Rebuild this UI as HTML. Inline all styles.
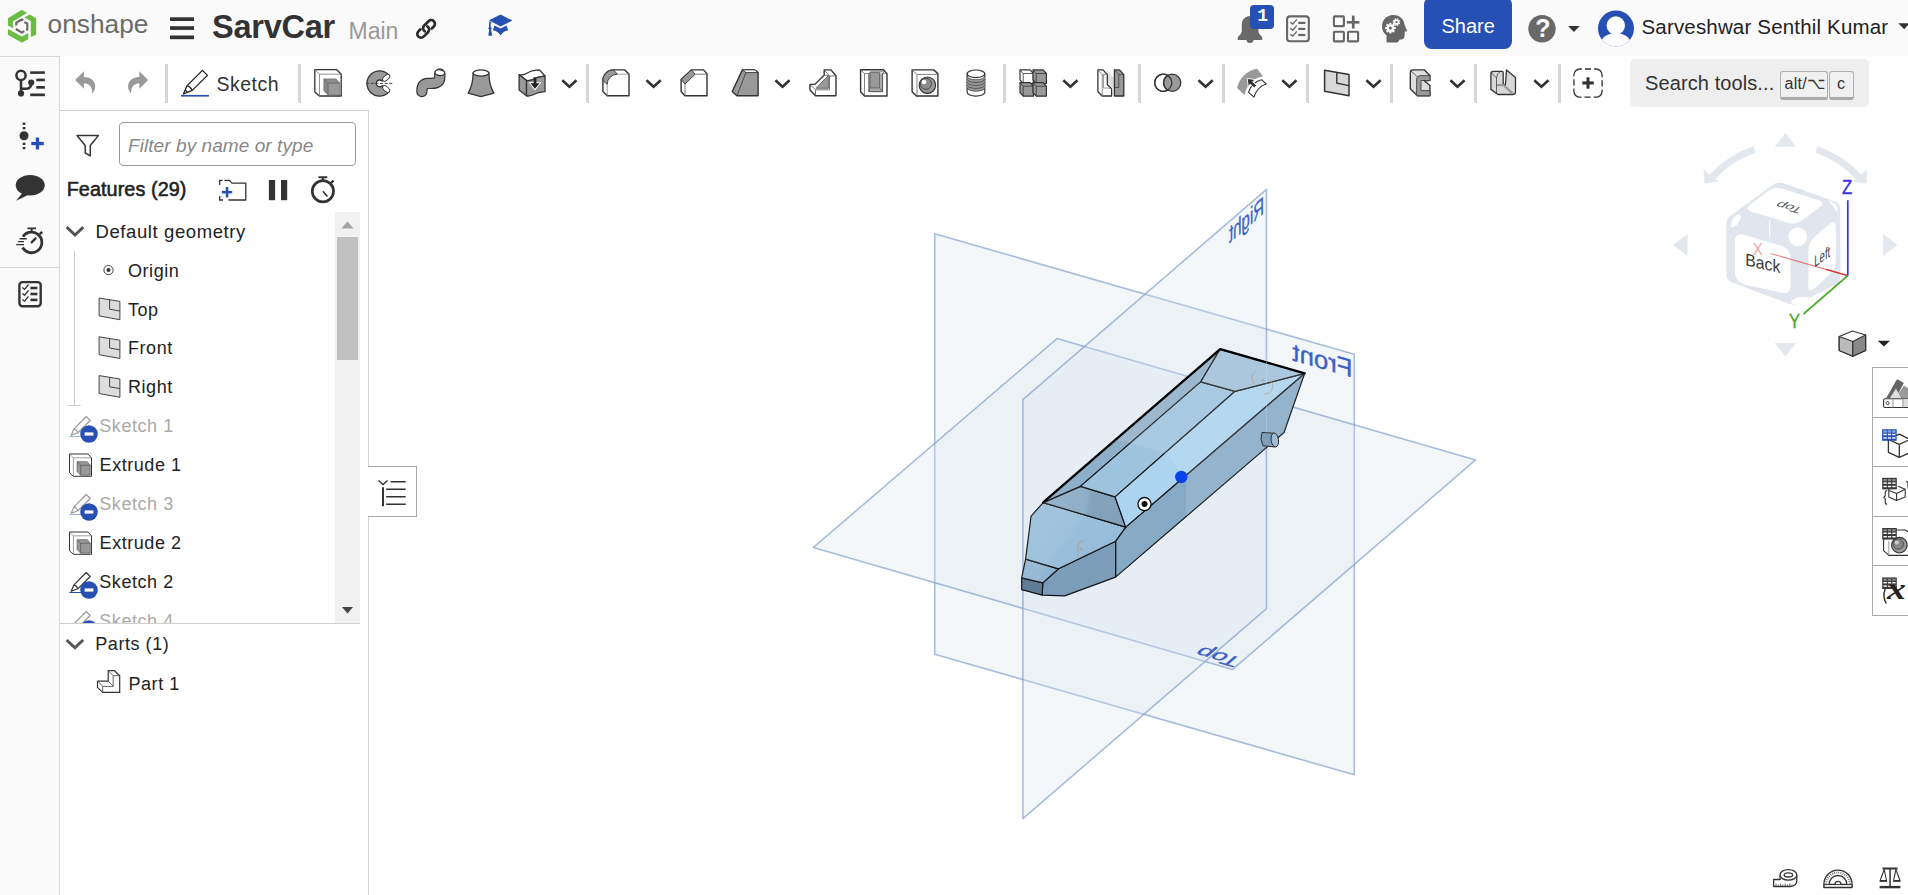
<!DOCTYPE html>
<html lang="en">
<head>
<meta charset="utf-8">
<title>SarvCar - Onshape</title>
<style>
*{box-sizing:border-box;margin:0;padding:0}
html,body{width:1908px;height:895px;overflow:hidden;background:#fff}
body{font-family:"Liberation Sans",sans-serif;color:#333;position:relative}
.abs{position:absolute}
.t{position:absolute;white-space:nowrap;line-height:1}
svg{position:absolute;overflow:visible}
#header{left:0;top:0;width:1908px;height:56px;background:#fafafa}
#leftbar{left:0;top:56px;width:60px;height:839px;background:#fafafa;border-top:1px solid #d8d8d8;border-right:1px solid #d8d8d8}
#toolbar{left:60px;top:56px;width:1848px;height:54px;background:#fff}
#panel{left:60px;top:110px;width:309px;height:785px;background:#fff;border-right:1px solid #d4d4d4;border-top:1px solid #d4d4d4}
.sep{position:absolute;top:64px;width:2.6px;height:39px;background:#d6d6d6}
.key{top:71px;height:29px;background:#f0f0f0;border:1px solid #b0b0b0;border-bottom:3px solid #aaa;border-radius:3px}
.tr{font-size:18px;letter-spacing:0.55px;color:#222}
.sup{color:#aaa}
.pl{color:#3c5fc6;-webkit-text-stroke:0.35px #3c5fc6}
.gt{fill:#8a8a8a}
.row{position:absolute;left:0;height:39px;width:275px}
</style>
</head>
<body>
<div id="header" class="abs"></div>
<div id="toolbar" class="abs"></div>
<div id="leftbar" class="abs"></div>
<div id="panel" class="abs"></div>

<!-- HEADER -->
<div id="hdr">
<span class="t" style="left:47.5px;top:10.5px;font-size:26.3px;color:#6b6b6b;">onshape</span>
<span class="t" style="left:212px;top:10.5px;font-size:32.5px;font-weight:700;color:#333;letter-spacing:-0.25px">SarvCar</span>
<span class="t" style="left:348.5px;top:19.5px;font-size:23px;color:#999">Main</span>
<div class="abs" style="left:1424px;top:-3px;width:88px;height:52px;background:#2650b3;border-radius:7.5px"></div>
<span class="t" style="left:1441.5px;top:16px;font-size:20px;color:#fff">Share</span>
<span class="t" style="left:1641.5px;top:17px;font-size:20.5px;color:#222;letter-spacing:0.17px">Sarveshwar Senthil Kumar</span>
<div class="abs" style="left:1250px;top:5px;width:24px;height:24px;background:#2650b3;border-radius:4px;z-index:3"></div>
<span class="t" style="left:1257.3px;top:6.5px;font-family:'Liberation Mono',monospace;font-weight:700;font-size:18px;color:#fff;z-index:4">1</span>
<span class="t" style="left:1535.2px;top:16.2px;font-weight:700;font-size:25px;color:#fff;z-index:4">?</span>
<svg width="1908" height="56" viewBox="0 0 1908 56" style="left:0;top:0">
 <!-- logo -->
 <g fill="#6cbb45">
  <polygon points="21.9,9.8 27.1,13.1 13.1,21.2 13.1,28.3 7.9,25.6 7.9,18.25"/>
  <polygon points="29.55,14.55 36.2,18.25 36.2,34.7 30.8,36.9 30.8,21.2 24.4,17.5"/>
  <polygon points="7.9,29.1 21.9,36.4 28.3,33 28.3,39.1 21.9,42.8 7.9,34.7"/>
 </g>
 <g fill="none" stroke="#666" stroke-width="2.1">
  <polyline points="23.3,20.2 21.9,19.5 16.3,22.7 16.3,25.6"/>
  <polyline points="15.8,29 21.9,32.6 24.3,31.2"/>
  <polyline points="24.4,22 27.3,23.6 27.3,29.6 26.2,30.2"/>
 </g>
 <!-- hamburger -->
 <g fill="#333"><rect x="170" y="17.3" width="24" height="3.7"/><rect x="170" y="26.2" width="24" height="3.7"/><rect x="170" y="35.5" width="24" height="3.7"/></g>
 <!-- link -->
 <g transform="translate(426.1,28.9) rotate(-45)" fill="none" stroke="#2b2b2b" stroke-width="2.7" stroke-linecap="round">
  <path d="M4.3,3.7 L7.2,3.7 A3.7,3.7 0 0 0 7.2,-3.7 L1,-3.7 A3.7,3.7 0 0 0 -2.6,0.9"/>
  <path d="M-4.3,-3.7 L-7.2,-3.7 A3.7,3.7 0 0 0 -7.2,3.7 L-1,3.7 A3.7,3.7 0 0 0 2.6,-0.9"/>
 </g>
 <!-- grad cap -->
 <g fill="#2650b3">
  <polygon points="500.6,14.6 512.4,20.6 500.6,26.6 489,20.3"/>
  <path d="M494.3,25.4 L500.6,28.5 L506.6,25.4 L508.1,30.3 C504.4,30.7 501.9,33.2 500.6,35.4 C499.3,33.2 496.8,30.7 493,30.3 Z"/>
  <path d="M489.6,21 C489,23 488.9,25 489,27.2 L490.6,27.2 C490.5,25 490.7,23.5 491.4,22 Z"/>
  <circle cx="490" cy="28.2" r="1.5"/>
  <path d="M489.3,29 L490.9,29 L492.2,35.7 L488.3,35.7 Z"/>
 </g>
 <!-- bell -->
 <g fill="#696969">
  <path d="M1250,16 C1245.5,16 1241.8,19.5 1241.8,24.5 L1241.8,31 C1241.8,33.5 1239.5,35.2 1237.8,37 L1237.8,40 L1262.2,40 L1262.2,37 C1260.5,35.2 1258.4,33.5 1258.4,31 L1258.4,24.5 C1258.4,19.5 1254.5,16 1250,16 Z"/>
  <path d="M1246.5,40 A3.5,3 0 0 0 1253.5,40 Z"/>
 </g>
 <!-- checklist -->
 <rect x="1287.1" y="16.4" width="21.7" height="24.9" rx="2.8" fill="none" stroke="#666" stroke-width="2.1"/>
 <g fill="#666"><rect x="1298.3" y="21.8" width="7.1" height="2.2"/><rect x="1298.3" y="27.8" width="7.1" height="2.2"/><rect x="1298.3" y="33.9" width="7.1" height="2.2"/></g>
 <g fill="none" stroke="#666" stroke-width="1.3"><polyline points="1290.3,22.3 1292.8,24.1 1296.8,19.3"/><polyline points="1290.3,28.35 1292.8,30.15 1296.8,25.35"/><polyline points="1290.3,34.4 1292.8,36.2 1296.8,31.4"/></g>
 <!-- apps plus -->
 <g fill="none" stroke="#666" stroke-width="2.1"><rect x="1333.9" y="16.4" width="10" height="9.7" rx="0.8"/><rect x="1333.9" y="31.7" width="10" height="9.7" rx="0.8"/><rect x="1348" y="31.7" width="10.1" height="9.7" rx="0.8"/></g>
 <g fill="#666"><rect x="1351.9" y="15.6" width="2.7" height="13"/><rect x="1346.9" y="21" width="12.5" height="2.6"/></g>
 <!-- head with gears -->
 <path fill="#666" d="M1393.2,15 C1400,15 1404.2,19.5 1404.6,25 L1407,30.3 C1407.2,31 1406.8,31.4 1406,31.5 L1404.8,31.6 L1404.6,36 C1404.5,38.5 1402.5,39.7 1399.8,39.6 L1398.3,41.5 C1398,42.2 1397.6,42.5 1396.9,42.5 L1387.6,42.5 C1386.8,42.5 1386.5,42.1 1386.5,41.3 L1386.5,35.5 C1383.5,33.2 1382,30 1382,26.5 C1382,20 1386.5,15 1393.2,15 Z"/>
 <g fill="#fff">
  <g transform="translate(1390.4,28.1)"><circle r="3.6"/><g id="tooth"><rect x="-1.1" y="-5.3" width="2.2" height="10.6"/></g><use href="#tooth" transform="rotate(45)"/><use href="#tooth" transform="rotate(90)"/><use href="#tooth" transform="rotate(135)"/><circle r="1.5" fill="#666"/></g>
  <g transform="translate(1396.4,22.1) scale(0.72) rotate(22)"><circle r="3.6"/><use href="#tooth"/><use href="#tooth" transform="rotate(45)"/><use href="#tooth" transform="rotate(90)"/><use href="#tooth" transform="rotate(135)"/><circle r="1.5" fill="#666"/></g>
 </g>
 <!-- help -->
 <circle cx="1542" cy="28.8" r="13.7" fill="#696969"/>
 <polygon points="1568.1,26 1579.7,26 1573.9,32" fill="#333"/>
 <!-- avatar -->
 <clipPath id="avc"><circle cx="1616" cy="28.4" r="18"/></clipPath>
 <circle cx="1616" cy="28.4" r="18" fill="#2650b3"/>
 <g clip-path="url(#avc)" fill="#fff"><circle cx="1615.8" cy="25.4" r="9.2"/><ellipse cx="1615.8" cy="42" rx="14.3" ry="9"/></g>
 <polygon points="1898.3,23.3 1908,23.3 1908,25 1904.2,29.2" fill="#333"/>
</svg>
</div>

<!-- TOOLBAR -->
<div id="tb">
<span class="t" style="left:216.4px;top:75px;font-size:19.5px;color:#333;letter-spacing:0.5px">Sketch</span>
<div class="sep" style="left:165.3px"></div><div class="sep" style="left:298.2px"></div><div class="sep" style="left:586.3px"></div>
<div class="sep" style="left:1003.2px"></div><div class="sep" style="left:1138.1px"></div><div class="sep" style="left:1222.3px"></div>
<div class="sep" style="left:1306.2px"></div><div class="sep" style="left:1390.2px"></div><div class="sep" style="left:1474.2px"></div><div class="sep" style="left:1558.2px"></div>
<div class="abs" style="left:1630px;top:59px;width:239px;height:48px;background:#eee;border-radius:5px"></div>
<span class="t" style="left:1645px;top:73px;font-size:20px;color:#333;letter-spacing:0.1px">Search tools...</span>
<div class="abs key" style="left:1780px;width:48px"></div><div class="abs key" style="left:1828.5px;width:25.5px"></div>
<span class="t" style="left:1784.5px;top:76px;font-size:16px;color:#333;letter-spacing:0.3px">alt/⌥</span>
<span class="t" style="left:1837px;top:76px;font-size:16px;color:#333">c</span>
<svg width="1908" height="56" viewBox="0 56 1908 56" style="left:0;top:56px">
<defs>
 <g id="chev"><polyline points="-7.1,-3.3 0,3.3 7.1,-3.3" fill="none" stroke="#333" stroke-width="2.6"/></g>
</defs>
<!-- tree icon -->
<g stroke="#333" fill="none" stroke-width="2.5">
 <circle cx="21" cy="75.4" r="4.6"/>
 <path d="M21,80.5 V93.4 M21,88.7 H26.5 Q31.2,88.7 31.2,83"/>
</g>
<g fill="#333"><circle cx="21" cy="93.4" r="3.1"/><circle cx="31.2" cy="82.6" r="3.1"/>
 <rect x="30.2" y="71.3" width="14.7" height="2.6"/><rect x="36.3" y="78.6" width="8.6" height="2.7"/><rect x="36.3" y="86" width="8.6" height="2.7"/><rect x="30.2" y="93.5" width="14.7" height="2.7"/></g>
<!-- undo / redo -->
<path id="undo" fill="#999" d="M75.2,79.9 L83.9,71.3 L83.9,76.9 C90.5,77 95.2,80.5 95.2,86.5 C95.2,89.5 93.8,92 92.1,93.6 C92.8,88.5 90,83.6 83.9,83.3 L83.9,88.7 Z"/>
<use href="#undo" transform="translate(223.3,0) scale(-1,1)"/>
<!-- pencil -->
<g fill="none" stroke="#222" stroke-width="1.3" stroke-linejoin="round">
 <path d="M183.4,94 L187.1,85.6 L202.45,70.4 L207.5,75.4 L192.2,90.4 Z"/>
 <path d="M187.1,85.6 Q190.5,86.5 192.2,90.4"/><path d="M185.2,90 L187.3,92.2"/>
</g>
<rect x="181.1" y="94.9" width="27.8" height="1.7" fill="#2650b3"/>
<!-- extrude -->
<g stroke-linejoin="round">
 <path d="M314.8,69.7 H336.8 L341.2,74.2 V96 H319.5 L314.8,91.9 Z" fill="#fff" stroke="#333" stroke-width="1.3"/>
 <path d="M314.8,69.7 L319.5,74.2 H341.2 M319.5,74.2 V96" fill="none" stroke="#777" stroke-width="0.8"/>
 <path d="M323.9,78.9 V90.7 L328.2,95 V83.2 Z" fill="#888" stroke="#666" stroke-width="0.7"/>
 <path d="M323.9,78.9 H336.1 L339.6,83.2 H328.2 Z" fill="#8e8e8e" stroke="#666" stroke-width="0.7"/>
 <rect x="328.2" y="83.2" width="11.6" height="11.9" fill="#999" stroke="#666" stroke-width="0.7"/>
</g>
<!-- revolve -->
<g>
 <path d="M389.4,75.6 A12.6,12.6 0 1 0 389.4,91.4 L382.1,85.7 A3.4,3.4 0 1 1 382.1,81.1 Z" fill="#999" stroke="#333" stroke-width="1.3" stroke-linejoin="round"/>
 <ellipse cx="386.2" cy="77.8" rx="4.5" ry="2.4" transform="rotate(-42 386.2 77.8)" fill="#fff" stroke="#333" stroke-width="0.9"/>
 <ellipse cx="386.2" cy="89" rx="4.5" ry="2.4" transform="rotate(42 386.2 89)" fill="#fff" stroke="#333" stroke-width="0.9"/>
 <path d="M366.3,83.4 H392.7" stroke="#333" stroke-width="0.9" stroke-dasharray="3,1.6" fill="none"/>
</g>
<!-- sweep -->
<g fill="none" stroke-linecap="round">
 <path id="swp" d="M439.8,74 V77 C439.8,84.5 432,83.2 428,83.4 C423,83.6 421.9,87 421.9,91.5"/>
</g>
<use href="#swp" fill="none" stroke="#333" stroke-width="11.4" stroke-linecap="round"/>
<use href="#swp" fill="none" stroke="#999" stroke-width="9" stroke-linecap="round"/>
<ellipse cx="439.8" cy="72.7" rx="4.9" ry="2.9" transform="rotate(8 439.8 72.7)" fill="#fff" stroke="#333" stroke-width="1.2"/>
<!-- loft -->
<path d="M473.1,73 C473.1,82 471.5,87.5 468.2,93.1 L480.9,96.6 L493.9,93.1 C490.6,87.5 488.9,82 488.9,73 Z" fill="#999" stroke="#333" stroke-width="1.3" stroke-linejoin="round"/>
<ellipse cx="481" cy="73" rx="7.9" ry="3.1" fill="#fff" stroke="#333" stroke-width="1.3"/>
<!-- thicken -->
<g stroke="#333" stroke-width="1.3" stroke-linejoin="round">
 <path d="M519.1,74.6 C525,76.5 528,71.5 532,70.8 C535.5,70.2 537.5,69.9 539.5,69.9 L545,76 C541,76.5 538,76.8 535,78.5 C532,80.2 529.5,81.2 526.5,80.5 Z" fill="#fff"/>
 <path d="M519.1,74.6 L526.5,80.5 V95.8 L519.1,89.9 Z" fill="#999"/>
 <path d="M526.5,80.5 C529.5,81.2 532,80.2 535,78.5 C538,76.8 541,76.5 545,76 V91.5 C541,92 538,92.3 535,94 C532,95.5 529.5,96.5 526.5,95.8 Z" fill="#999"/>
</g>
<path d="M528.6,82.2 H541.4 L535,90.6 Z" fill="#fff"/>
<path d="M533.7,77.3 H536.4 V83.3 H539.6 L535,88.7 L530.4,83.3 H533.7 Z" fill="#222"/>
<use href="#chev" x="569.4" y="83.5"/>
<!-- fillet -->
<g stroke-linejoin="round">
 <path d="M602.9,91.5 V80.5 A10.6,10.6 0 0 1 613.5,69.9 H624.9 L629,74.2 V95.8 H607.2 Z" fill="#fff" stroke="#333" stroke-width="1.4"/>
 <path d="M602.9,80.5 A10.6,10.6 0 0 1 613.5,69.9 L617.4,74.2 A10.2,10.2 0 0 0 607.2,84.4 Z" fill="#999" stroke="#333" stroke-width="0.9"/>
 <path d="M617.4,74.2 H629 M607.2,84.4 V95.8" stroke="#888" stroke-width="0.8" fill="none"/>
</g>
<use href="#chev" x="653.6" y="83.5"/>
<!-- chamfer -->
<g stroke-linejoin="round">
 <path d="M681.1,91.5 V79.5 L691.3,69.9 H703.5 L707,73.8 V95.8 H685 Z" fill="#fff" stroke="#333" stroke-width="1.4"/>
 <path d="M681.1,79.5 L691.3,69.9 L695.2,74.2 L685,84 Z" fill="#999" stroke="#333" stroke-width="0.9"/>
 <path d="M695.2,74.2 H707 M685,84 V95.8" stroke="#555" stroke-width="0.8" fill="none"/>
</g>
<!-- draft -->
<g stroke-linejoin="round">
 <path d="M732.2,91.5 L742.4,69.9 H754.6 L758.1,72.6 V95.8 H736.9 Z" fill="#999" stroke="#333" stroke-width="1.4"/>
 <path d="M742.4,69.9 H754.6 L758.1,72.6 H745.9 Z" fill="#fff" stroke="#333" stroke-width="0.9"/>
 <path d="M745.9,72.6 L736.9,95.8" stroke="#333" stroke-width="0.8" fill="none"/>
</g>
<use href="#chev" x="782.5" y="83.5"/>
<!-- rib -->
<g stroke-linejoin="round">
 <path d="M824.2,69.9 H830.9 L836,75.8 V95.8 H815.5 L810,89.9 V84.4 H814.7 L824.2,75 Z" fill="#fff" stroke="#333" stroke-width="1.4"/>
 <path d="M816,88.3 L828.4,75.6 V88.3 Z" fill="#999" stroke="#555" stroke-width="0.8"/>
 <path d="M814.7,84.4 L824.2,75 L828.4,75.6 M824.2,69.9 L829.5,76 V89.8 H815.5 L810,84.4 M815.5,89.8 V95.8 M829.5,76 L836,75.8" stroke="#555" stroke-width="0.8" fill="none"/>
</g>
<!-- shell -->
<g stroke-linejoin="round">
 <path d="M860.6,69.7 H883.4 L887,73.6 V96 H864.5 L860.6,91.7 Z" fill="#fff" stroke="#333" stroke-width="1.4"/>
 <path d="M860.6,69.7 L864.5,73.6 H887 M864.5,73.6 V96" stroke="#666" stroke-width="0.8" fill="none"/>
 <path d="M868.9,73.6 V91.7 H882.6 V73.6" fill="#aaa" stroke="#444" stroke-width="0.9"/>
 <path d="M868.9,73.6 L870.6,71.8 H884 L882.6,73.6" fill="#fff" stroke="#444" stroke-width="0.7"/>
 <path d="M870,72.4 V87.9 H879.5 V72.4 Z" fill="#999" stroke="#555" stroke-width="0.7"/>
 <path d="M879.5,87.9 L882.6,91.7 M869.7,87.9 L868.9,91.7" stroke="#555" stroke-width="0.7"/>
</g>
<!-- hole -->
<g stroke-linejoin="round">
 <path d="M912.1,69.9 H933.7 L937.9,73.6 V96 H916.4 L912.1,91.7 Z" fill="#fff" stroke="#333" stroke-width="1.4"/>
 <path d="M912.1,69.9 L917,74.4 H937.9 M917,74.4 V96" stroke="#666" stroke-width="0.8" fill="none"/>
 <circle cx="927.4" cy="85.2" r="8.2" fill="#999" stroke="#333" stroke-width="1.1"/>
 <circle cx="925.9" cy="83.8" r="5.6" fill="#8c8c8c" stroke="#444" stroke-width="0.9"/>
 <circle cx="924" cy="82" r="2.3" fill="#fff"/>
</g>
<!-- thread -->
<g>
 <path d="M967.1,73.8 V92.3 A8.85,3.8 0 0 0 984.8,92.3 V73.8 Z" fill="#fff" stroke="#333" stroke-width="1.2"/>
 <path d="M967.1,76.2 A8.85,3.6 0 0 0 984.8,76.2 V87.6 A8.85,3.6 0 0 1 967.1,87.6 Z" fill="#999"/>
 <g fill="none" stroke="#444" stroke-width="0.8"><path d="M967.1,76.2 A8.85,3.6 0 0 0 984.8,76.2"/><path d="M967.1,79 A8.85,3.6 0 0 0 984.8,79"/><path d="M967.1,81.9 A8.85,3.6 0 0 0 984.8,81.9"/><path d="M967.1,84.8 A8.85,3.6 0 0 0 984.8,84.8"/><path d="M967.1,87.6 A8.85,3.6 0 0 0 984.8,87.6"/></g>
 <ellipse cx="975.95" cy="73.8" rx="8.85" ry="3.8" fill="#fff" stroke="#333" stroke-width="1.2"/>
</g>
<!-- pattern -->
<defs><g id="cb" stroke-linejoin="round"><path d="M0,0 H10.2 L13.4,3.6 V13.6 H3.2 L0,10 Z"/><path d="M0,0 L3.2,3.6 H13.4 M3.2,3.6 V13.6" fill="none" stroke-width="0.8"/></g></defs>
<use href="#cb" x="1020" y="69.9" fill="#fff" stroke="#333" stroke-width="1.2"/>
<use href="#cb" x="1033" y="69.9" fill="#999" stroke="#333" stroke-width="1.2"/>
<use href="#cb" x="1020" y="82.6" fill="#999" stroke="#333" stroke-width="1.2"/>
<use href="#cb" x="1033" y="82.6" fill="#999" stroke="#333" stroke-width="1.2"/>
<use href="#chev" x="1070.4" y="83.5"/>
<!-- mirror -->
<g stroke-linejoin="round">
 <path d="M1106.5,69.9 L1113.6,77.7 V88.7 L1106.5,80.9 Z" fill="#ddd"/>
 <path d="M1097.9,69.9 H1103 L1107.3,74.6 V84.5 L1111.6,88.7 V96 H1102.2 L1097.9,91.7 Z" fill="#fff" stroke="#333" stroke-width="1.3"/>
 <path d="M1097.9,69.9 L1102.2,74.6 H1107.3 M1102.2,74.6 V96 M1103.4,74.6 V88 H1107.5 L1111.6,88.7" stroke="#777" stroke-width="0.8" fill="none"/>
 <path d="M1114.4,69.9 H1119.5 L1123.8,74.6 V96 H1114.4 Z" fill="#999" stroke="#333" stroke-width="1.3"/>
 <path d="M1114.4,69.9 L1118.8,74.6 H1123.8 M1118.8,74.6 V87.5 H1114.4" stroke="#444" stroke-width="0.8" fill="none"/>
</g>
<!-- boolean -->
<circle cx="1172.2" cy="82.8" r="8.6" fill="#999" stroke="#333" stroke-width="1.3"/>
<path d="M1167.7,75.4 A8.6,8.6 0 1 0 1167.7,90.2 A8.6,8.6 0 0 1 1167.7,75.4 Z" fill="#fff" stroke="#333" stroke-width="1.3"/>
<circle cx="1163.2" cy="82.8" r="8.6" fill="none" stroke="#333" stroke-width="1.3"/>
<use href="#chev" x="1205.6" y="83.5"/>
<!-- offset surface -->
<path d="M1237.1,87.9 C1239,79 1246,70.5 1257.1,68.7 L1263,76.2 C1253,78 1246.5,85 1244.6,95 Z" fill="#999"/>
<path d="M1248.5,92.3 C1250.5,86 1255,81.5 1261.5,79.7 L1266.2,84 C1260,86 1256,90.5 1254,97 Z" fill="#fff" stroke="#333" stroke-width="1.1" stroke-linejoin="round"/>
<path d="M1247.2,78.4 L1255,79.6 L1252.7,81.8 L1256.6,85.6 L1254.2,88 L1250.3,84.1 L1248.2,86.4 Z" fill="#333" stroke="#fff" stroke-width="0.9"/>
<use href="#chev" x="1289.4" y="83.5"/>
<!-- plane -->
<path d="M1324.6,70.3 L1349,74.6 V95.8 L1324.6,91.2 Z" fill="#d8d8d8" stroke="#333" stroke-width="1.5" stroke-linejoin="round"/>
<path d="M1336.8,72.6 V83.2 L1349,85.6" fill="none" stroke="#333" stroke-width="1.4"/>
<use href="#chev" x="1373.5" y="83.5"/>
<!-- C shape -->
<g stroke-linejoin="round">
 <path d="M1410.3,72.6 Q1410.3,69.9 1413,69.9 H1424.4 L1429.9,75.4 V80.5 H1424 L1429.9,85.5 V95.8 H1417.4 L1410.3,88.7 Z" fill="#ddd" stroke="#333" stroke-width="1.4"/>
 <path d="M1416.6,80 Q1416.6,75.6 1421,75.6 H1429.9 V80.5 H1421 V90.6 H1429.9 V95.8 H1417.4 L1416.6,95 Z" fill="#999" stroke="#444" stroke-width="0.9"/>
 <path d="M1411,71 L1417.5,77" stroke="#444" stroke-width="0.8"/>
</g>
<use href="#chev" x="1457.5" y="83.5"/>
<!-- sheet metal U -->
<g stroke-linejoin="round">
 <path d="M1490.9,74 Q1490.9,71.4 1493.5,71.4 H1502 Q1503.2,71.4 1503.2,72.8 V84 L1505.4,85 L1506.5,70 L1515.5,77.6 V92 Q1515.5,94.5 1512.6,94.5 H1498 L1490.9,89.4 Z" fill="#d8d8d8" stroke="#333" stroke-width="1.3"/>
 <path d="M1496.5,84 H1504 L1513.5,92.8 L1511.5,94.3 L1503.2,86.2 H1496.5 Z" fill="#999"/>
 <path d="M1491.5,73 L1496.5,78 V93.5 M1496.5,78 Q1497,73 1500,72" stroke="#444" stroke-width="0.8" fill="none"/>
</g>
<use href="#chev" x="1541.4" y="83.5"/>
<!-- dashed plus -->
<rect x="1573.9" y="69" width="28.2" height="28.2" rx="6" fill="none" stroke="#333" stroke-width="1.3" stroke-dasharray="6.2 3 13.4 3" stroke-dashoffset="-5"/>
<rect x="1586.5" y="77.3" width="3" height="11.4" fill="#333"/><rect x="1582.3" y="81.4" width="11.5" height="3.1" fill="#333"/>
</svg>
</div>

<!-- FEATURE PANEL -->
<div id="fp">
<svg width="60" height="839" viewBox="0 56 60 839" style="left:0;top:56px">
 <!-- insert -->
 <g fill="#333"><rect x="22.7" y="122.6" width="2.7" height="2.3"/><rect x="22.7" y="127" width="2.7" height="2.3"/><circle cx="24" cy="135.7" r="4.5"/><rect x="22.7" y="142.7" width="2.7" height="2.3"/><rect x="22.7" y="146.9" width="2.7" height="2.3"/></g>
 <g fill="#2650b3"><rect x="35.8" y="137.5" width="3.3" height="11.9"/><rect x="31.3" y="141.9" width="12.5" height="3.3"/></g>
 <!-- comment -->
 <ellipse cx="30.2" cy="185.2" rx="14.5" ry="10.3" fill="#333"/><path d="M22.3,193 L16.2,200.8 L28.5,194.8 Z" fill="#333"/>
 <!-- stopwatch -->
 <g fill="none" stroke="#333">
  <path d="M23,236.7 A10.3,10.3 0 1 1 22.6,247.5" stroke-width="2.8"/>
  <path d="M27.4,228.4 H36 M31.7,228.4 V231.5" stroke-width="1.8"/>
  <path d="M39.8,234.2 L42.2,231.8" stroke-width="2.6"/>
  <path d="M31.6,242.4 L35.6,238.4" stroke-width="2.2" stroke-linecap="round"/>
  <path d="M19.6,238.7 H26.8 M17.9,241.6 H24 M16.2,244.6 H24" stroke-width="1.4"/>
 </g>
 <rect x="0" y="267" width="59" height="1" fill="#d8d8d8"/>
 <!-- checklist -->
 <rect x="19.4" y="282.1" width="21.3" height="24.2" rx="3" fill="none" stroke="#333" stroke-width="2.4"/>
 <g fill="#333"><rect x="30.4" y="286.7" width="7" height="2.6"/><rect x="30.4" y="292.7" width="7" height="2.6"/><rect x="30.4" y="298.6" width="7" height="2.6"/></g>
 <g fill="none" stroke="#333" stroke-width="1.3"><polyline points="22.3,287.6 24.6,289.3 28.5,284.5"/><polyline points="22.3,293.55 24.6,295.25 28.5,290.45"/><polyline points="22.3,299.5 24.6,301.2 28.5,296.4"/></g>
</svg>
<!-- filter -->
<div class="abs" style="left:119px;top:122px;width:237px;height:44px;border:1px solid #9a9a9a;border-radius:4px;background:#fff"></div>
<span class="t" style="left:128px;top:135.5px;font-size:19px;font-style:italic;color:#888;letter-spacing:0.07px">Filter by name or type</span>
<span class="t" style="left:66.7px;top:180.3px;font-size:19.8px;color:#222;letter-spacing:0.08px;-webkit-text-stroke:0.55px #222">Features (29)</span>
<!-- scrollbar -->
<div class="abs" style="left:335px;top:212px;width:25px;height:411px;background:#f1f1f1"></div>
<div class="abs" style="left:337px;top:237px;width:21px;height:123px;background:#c1c1c1"></div>
<!-- tree -->
<div class="abs" style="left:60px;top:623px;width:300px;height:1px;background:#d0d0d0"></div>
<span class="t tr" style="left:95.5px;top:222.5px;font-size:18.5px;letter-spacing:0.6px">Default geometry</span>
<span class="t tr" style="left:128px;top:261.8px">Origin</span>
<span class="t tr" style="left:128px;top:300.6px">Top</span>
<span class="t tr" style="left:128px;top:339.4px">Front</span>
<span class="t tr" style="left:128px;top:378.2px">Right</span>
<span class="t tr sup" style="left:99.3px;top:417px">Sketch 1</span>
<span class="t tr" style="left:99.6px;top:456.3px">Extrude 1</span>
<span class="t tr sup" style="left:99.3px;top:495.2px">Sketch 3</span>
<span class="t tr" style="left:99.6px;top:534.2px">Extrude 2</span>
<span class="t tr" style="left:99.3px;top:573.1px">Sketch 2</span>
<div class="abs" style="left:60px;top:600px;width:275px;height:23px;overflow:hidden"><span class="t tr sup" style="left:39.3px;top:12px">Sketch 4</span></div>
<span class="t tr" style="left:95.3px;top:635.3px">Parts (1)</span>
<span class="t tr" style="left:128.5px;top:674.6px">Part 1</span>
<!-- right tab -->
<div class="abs" style="left:368px;top:466px;width:49px;height:51px;background:#fff;border:1px solid #a8a8a8;border-left:none"></div>
<svg width="360" height="785" viewBox="60 110 360 785" style="left:60px;top:110px">
 <defs>
  <g id="plane"><path d="M0,0 L20.8,3.4 V21.7 L0,17.9 Z" fill="#ddd" stroke="#444" stroke-width="1"/><path d="M10.5,1.8 V11.2 L20.8,13" fill="none" stroke="#444" stroke-width="1"/></g>
  <g id="pen"><path d="M2.2,19.8 L5,13.3 L17.2,1 L21.2,5 L9,17.2 Z M5,13.3 Q7.8,14 9,17.2" fill="none" stroke-width="1.2" stroke-linejoin="round"/></g>
  <g id="minus"><circle r="8.8" fill="#2650b3"/><rect x="-4.4" y="-1.6" width="8.8" height="3.2" fill="#fff"/></g>
  <g id="ext"><path d="M0,0 H18.4 L22,3.8 V22.3 H3.9 L0,18.8 Z" fill="#fff" stroke="#333" stroke-width="1"/><path d="M0,0 L3.9,3.8 H22 M3.9,3.8 V22.3" fill="none" stroke="#777" stroke-width="0.7"/><path d="M7.6,7.7 H17.8 L20.7,11.2 V21.2 H11.2 L7.6,17.6 Z" fill="#999" stroke="#555" stroke-width="0.7"/><path d="M7.6,7.7 L11.2,11.2 H20.7 M11.2,11.2 V21.2" fill="none" stroke="#555" stroke-width="0.7"/></g>
 </defs>
 <!-- filter funnel -->
 <path d="M77,135.6 H98.3 L90.3,145.5 V155.8 L85.2,153 V145.5 Z" fill="none" stroke="#333" stroke-width="1.5" stroke-linejoin="round"/>
 <!-- folder plus -->
 <g fill="none" stroke="#333" stroke-width="1.3"><path d="M224.5,180.3 H229.5 L232,183.2 H245.8 V200 H228.5" stroke-linejoin="round"/><path d="M219.7,185 V180.3 H222.5" /><path d="M219.7,196 V200 H223" /></g>
 <g fill="#2650b3"><rect x="225.8" y="187" width="2.5" height="10.4"/><rect x="221.8" y="190.9" width="10.4" height="2.5"/></g>
 <!-- pause -->
 <rect x="268.9" y="180" width="6.2" height="20.2" fill="#333"/><rect x="281" y="180" width="6.2" height="20.2" fill="#333"/>
 <!-- stopwatch -->
 <g fill="none" stroke="#333"><circle cx="322.9" cy="191.3" r="10.6" stroke-width="2.7"/><path d="M318.5,177.2 H327.3 M322.9,177.2 V180.5" stroke-width="1.9"/><path d="M331,183 L333.5,180.5" stroke-width="2.4"/><path d="M322.9,191.3 L327.5,196.5" stroke-width="1.6"/></g>
 <!-- scroll arrows -->
 <path d="M341.5,228.5 L347.5,221.5 L353.5,228.5 Z" fill="#a3a3a3"/><path d="M342,607 L347.5,613.5 L353,607 Z" fill="#444"/>
 <!-- chevrons -->
 <polyline points="66.7,227.2 75,235 83.3,227.2" fill="none" stroke="#555" stroke-width="3"/>
 <polyline points="66.6,640 74.9,647.8 83.2,640" fill="none" stroke="#555" stroke-width="3"/>
 <!-- tree line -->
 <path d="M74.5,251 V405.5 M67.4,405.5 H80.6" stroke="#ccc" stroke-width="1" fill="none"/>
 <!-- origin -->
 <circle cx="108.5" cy="270.1" r="4.6" fill="#fff" stroke="#444" stroke-width="1"/><circle cx="108.5" cy="270.1" r="2" fill="#333"/>
 <use href="#plane" x="99.1" y="298"/><use href="#plane" x="99.1" y="336.8"/><use href="#plane" x="99.1" y="375.6"/>
 <!-- sketch rows -->
 <g><use href="#pen" x="69" y="415.5" stroke="#999" stroke-width="1.15"/><rect x="69.3" y="436" width="12" height="1" fill="#9db0e0"/><use href="#minus" x="89" y="434"/></g>
 <use href="#ext" x="69.5" y="454"/>
 <g><use href="#pen" x="69" y="493.5" stroke="#999" stroke-width="1.15"/><rect x="69.3" y="514" width="12" height="1" fill="#9db0e0"/><use href="#minus" x="89" y="512"/></g>
 <use href="#ext" x="69.5" y="532"/>
 <g><use href="#pen" x="69" y="571.5" stroke="#333"/><rect x="69.3" y="592" width="12" height="1" fill="#2650b3"/><use href="#minus" x="89" y="590"/></g>
 <clipPath id="c622"><rect x="60" y="600" width="275" height="23"/></clipPath><g clip-path="url(#c622)"><use href="#pen" x="69" y="610.5" stroke="#999" stroke-width="1.15"/><use href="#minus" x="89" y="629"/></g>
 <!-- part icon -->
 <path d="M108.2,670.7 H114.5 L119.7,675.7 V692.4 H102.7 L97.5,687.4 V681.1 H108.2 Z" fill="#fff" stroke="#333" stroke-width="1.2" stroke-linejoin="round"/>
 <path d="M108.2,670.7 L113.2,675.7 H119.7 M113.2,675.7 V686.2 M97.5,681.1 L102.7,686.4 H113.2 M102.7,686.4 V692.4 M108.2,681.1 L113.2,686.2" fill="none" stroke="#555" stroke-width="0.9"/>
 <!-- tab icon -->
 <g fill="none" stroke="#333"><polyline points="378.5,480.4 383,484.6 387.5,480.4" stroke-width="1.4"/><path d="M383,487.2 V506.2" stroke-width="2"/><path d="M390.6,481.7 H405.7 M386.1,489.2 H405.7 M386.1,496.7 H405.7 M386.1,504.3 H405.7" stroke-width="1.4"/></g>
</svg>
</div>

<!-- CANVAS -->
<div id="cv">
<svg width="1539" height="785" viewBox="369 110 1539 785" style="left:369px;top:110px">
 <!-- planes -->
 <g fill="rgba(220,227,238,0.3)" stroke="rgba(128,158,205,0.68)" stroke-width="1.6" stroke-linejoin="round">
  <polygon points="934.7,233.7 1354.3,354.3 1354.3,774.8 934.7,654.2"/>
  <polygon points="1057,338.6 1475.6,459.9 1232.6,669.4 813.4,547.4"/>
  <polygon points="1022.9,399.6 1266.5,189.4 1266.5,608.6 1022.9,818.6"/>
 </g>
 <!-- car -->
 <g stroke="#151515" stroke-width="1.2" stroke-linejoin="round">
  <!-- side face -->
  <polygon points="1304.7,373.3 1284,432.5 1115.6,577.1 1115.6,541.2 1125.7,527.1" fill="#86a9c6"/>
  <!-- lower front-right face -->
  <polygon points="1058.5,568.8 1115.6,541.2 1115.6,577.1 1064.7,595.9 1042.1,595.1 1042.8,582.9" fill="#7b9dba"/>
  <!-- nose tip -->
  <polygon points="1021.7,577.9 1042.8,582.9 1042.1,595.1 1021.7,589.6" fill="#5f7d96"/>
  <!-- small nose face -->
  <polygon points="1025.6,559.1 1058.5,568.8 1042.8,582.9 1021.7,577.9" fill="#90b5d3"/>
  <!-- hood -->
  <polygon points="1031.1,516.1 1043.2,502.6 1125.7,527.1 1115.6,541.2 1058.5,568.8 1025.6,559.1" fill="#98bedb"/>
  <!-- windshield -->
  <polygon points="1043.2,502.6 1080.4,486.4 1115.1,496.9 1125.7,527.1" fill="#8aacc7"/>
  <!-- left roof -->
  <polygon points="1220.2,349.1 1200.7,381.9 1080.4,486.4 1043.2,502.6" fill="#8eafc9"/>
  <!-- middle roof -->
  <polygon points="1200.7,381.9 1235.1,391.3 1115.1,496.9 1080.4,486.4" fill="#9dc3df"/>
  <!-- right (cockpit) -->
  <polygon points="1235.1,391.3 1304.7,373.3 1125.7,527.1 1115.1,496.9" fill="#acd4f0"/>
  <!-- rear top -->
  <polygon points="1220.2,349.1 1304.7,373.3 1235.1,391.3 1200.7,381.9" fill="#a1c1da"/>
 </g>
 <linearGradient id="hg" gradientUnits="userSpaceOnUse" x1="1030" y1="510" x2="1110" y2="570"><stop offset="0" stop-color="#fff" stop-opacity="0.10"/><stop offset="0.45" stop-color="#fff" stop-opacity="0.06"/><stop offset="0.5" stop-color="#fff" stop-opacity="0"/><stop offset="1" stop-color="#000" stop-opacity="0.03"/></linearGradient>
 <polygon points="1031.1,516.1 1043.2,502.6 1125.7,527.1 1115.6,541.2 1058.5,568.8 1042.8,582.9 1021.7,577.9 1025.6,559.1" fill="url(#hg)"/>
 <linearGradient id="wg" gradientUnits="userSpaceOnUse" x1="1045" y1="500" x2="1125" y2="515"><stop offset="0" stop-color="#fff" stop-opacity="0.10"/><stop offset="0.5" stop-color="#fff" stop-opacity="0.04"/><stop offset="0.55" stop-color="#000" stop-opacity="0.05"/><stop offset="1" stop-color="#000" stop-opacity="0.07"/></linearGradient>
 <polygon points="1043.2,502.6 1080.4,486.4 1115.1,496.9 1125.7,527.1" fill="url(#wg)"/>
 <clipPath id="carc"><polygon points="1043.2,502.6 1220.2,349.1 1304.7,373.3 1284,432.5 1115.6,577.1 1064.7,595.9 1042.1,595.1 1021.7,589.6 1021.7,577.9 1025.6,559.1 1031.1,516.1"/></clipPath>
 <polygon clip-path="url(#carc)" points="1186,600 1186,476 1167,455 1145,447 1120,441 1090,437 1040,433 1040,330 1320,330 1320,600" fill="rgba(236,239,243,0.14)"/>
 <path d="M1043.2,502.4 L1220.2,349.1 L1304.7,373.3" fill="none" stroke="#000" stroke-width="2.3" stroke-linejoin="round" stroke-linecap="round"/>
 <!-- axle -->
 <path d="M1262,432.5 L1273.5,433.2 L1275,447 L1263,445.8 Q1259.5,439 1262,432.5 Z" fill="#7f9fb9" stroke="#222" stroke-width="0.9"/>
 <ellipse cx="1274.8" cy="440" rx="3.7" ry="7" transform="rotate(-8 1274.8 440)" fill="#9dbdd6" stroke="#222" stroke-width="0.9"/>
 <!-- plane edges passing over the model (faint) -->
 <path d="M1266.5,352 V432" stroke="rgba(200,220,240,0.35)" stroke-width="1.2"/>
 <!-- ghost mate connector marks -->
 <g fill="none" stroke="#b9a08f" stroke-width="1" opacity="0.75"><path d="M1256,371 A8,8 0 0 0 1254.5,384"/><path d="M1270,380 A8,8 0 0 1 1264.5,394"/><circle cx="1262.8" cy="380.2" r="1.4" fill="#b9a08f" stroke="none"/></g>
 <g fill="none" stroke="#b9a08f" stroke-width="1.1" opacity="0.8"><path d="M1084,542.5 Q1083.5,540 1081.5,541 Q1075.5,545.5 1078.5,556.5"/><circle cx="1080.5" cy="549" r="1.6" fill="#b9a08f" stroke="none"/></g>
 <!-- origin marker -->
 <circle cx="1144.5" cy="504.1" r="6.6" fill="#fff" stroke="#111" stroke-width="1.3"/><circle cx="1144.5" cy="504.1" r="3" fill="#111"/>
 <circle cx="1181.3" cy="477" r="6.2" fill="#0a44e8"/>
</svg>
<span class="t pl" style="left:0;top:0;font-size:25px;transform-origin:0 0;transform:matrix(-1.03,-0.2956,0,1,1352.5,356.6)">Front</span>
<span class="t pl" style="left:0;top:0;font-size:25px;transform-origin:0 0;transform:matrix(-0.6,0.516,0,1,1264,192.3)">Right</span>
<span class="t pl" style="left:0;top:0;font-size:25px;transform-origin:0 0;transform:matrix(-1.026,-0.301,0.577,-0.499,1231.5,669.3)">Top</span>
</div>
<!-- VIEWCUBE -->
<div id="vc">
<svg width="260" height="260" viewBox="1660 120 260 260" style="left:1660px;top:120px">
 <g fill="#e3e8ef">
  <polygon points="1774.7,146.7 1795.9,146.7 1785.4,133.1"/>
  <polygon points="1774.7,343 1795.9,343 1785.4,356.6"/>
  <polygon points="1673.1,244.9 1687.6,233.8 1687.6,255.9"/>
  <polygon points="1897.5,244.9 1883,233.8 1883,255.9"/>
  <polygon points="1703.5,169.5 1704.6,183.6 1718.5,181.5"/>
  <polygon points="1867.3,169.5 1866.2,183.6 1852.3,181.5"/>
 </g>
 <g fill="none" stroke="#e3e8ef" stroke-width="7">
  <path d="M1754.4,149.5 A100.5,100.5 0 0 0 1711.5,177.8"/>
  <path d="M1816.4,149.5 A100.5,100.5 0 0 1 1859.3,177.8"/>
 </g>
 <!-- cube body -->
 <path d="M1726.3,224 Q1726.3,218.8 1730.5,215.8 L1772.5,185 Q1777.5,181.5 1783,183 L1835,201.5 Q1840,203.5 1840.3,209 L1840.5,276 Q1840.5,281.5 1836.5,284.5 L1799,303 Q1793.5,306 1788,303.5 L1731,282 Q1726.3,279.5 1726.3,274 Z" fill="#e1e6ee"/>
 <g fill="#fff">
  <!-- back face -->
  <path d="M1734.9,242 Q1734.9,232.1 1744,234.8 L1781,245.7 Q1790.4,248.5 1790.4,258 V285.5 Q1790.4,295.5 1781,292.5 L1744,284.4 Q1734.9,281.4 1734.9,272 Z"/>
  <!-- top face -->
  <path d="M1750.5,204.5 L1767.5,191.5 Q1774.3,186.3 1782.5,188.8 L1818,200 Q1825.5,202.6 1819.5,207.3 L1802,220.5 Q1795.3,225 1787.5,222.6 L1751.5,211.8 Q1744,209.4 1750.5,204.5 Z"/>
  <!-- left face -->
  <path d="M1808.4,251 Q1808.4,242.3 1814.5,237 L1829.5,224 Q1835.8,218.8 1835.8,227 V260 Q1835.8,268.9 1829.5,274.5 L1814.5,288.5 Q1808.4,293.9 1808.4,285 Z"/>
  <circle cx="1797.8" cy="236.8" r="9.3"/>
  <ellipse cx="1735.8" cy="220.8" rx="3.4" ry="7.5" transform="rotate(35 1735.8 220.8)"/>
  <ellipse cx="1799.8" cy="300.4" rx="9" ry="3.2" transform="rotate(-12 1799.8 300.4)"/>
  <path d="M1828,199.5 L1838,213 L1836.5,205 Z"/>
  <rect x="1769.2" y="220" width="1" height="17"/>
 </g>
 <!-- axes -->
 <path d="M1847.8,275.6 L1770.4,253.5" stroke="#e05a5a" stroke-width="1.1" opacity="0.75"/>
 <path d="M1847.8,275.6 L1826,269.4" stroke="#d83030" stroke-width="1.4"/>
 <path d="M1847.8,275.6 V200.2" stroke="#3a34e6" stroke-width="1.7"/>
 <path d="M1847.8,275.6 L1803.6,313.9" stroke="#4aa827" stroke-width="1.9"/>
 <!-- small cube -->
 <g stroke="#333" stroke-width="1.2" stroke-linejoin="round">
  <path d="M1839.2,336.5 L1852.5,331 L1865.6,335 V350.5 L1852.8,356.3 L1839.2,350.5 Z" fill="#fff"/>
  <path d="M1839.2,336.5 L1852.8,341.5 V356.3 L1839.2,350.5 Z" fill="#bbb"/>
  <path d="M1852.8,341.5 L1865.6,335 V350.5 L1852.8,356.3 Z" fill="#888"/>
 </g>
 <polygon points="1877.8,340.7 1890,340.7 1883.9,346.6" fill="#222"/>
</svg>
<span class="t" style="left:1842.3px;top:175.7px;font-size:21px;color:#3a34e6;-webkit-text-stroke:0.4px #3a34e6;transform:scaleX(0.8);transform-origin:0 0">Z</span>
<span class="t" style="left:1788.5px;top:311px;font-size:20.5px;color:#4aa827;-webkit-text-stroke:0.4px #4aa827;transform:scaleX(0.8);transform-origin:0 0">Y</span>
<span class="t" style="left:1752.5px;top:240.5px;font-size:17px;color:#f0a3a3;transform:scaleX(0.85);transform-origin:0 0">X</span>
<span class="t" style="left:0;top:0;font-size:17.5px;color:#3a3a3a;transform-origin:0 0;transform:matrix(0.9,0.2,0,1,1745.3,251.3)">Back</span>
<span class="t" style="left:0;top:0;font-size:16px;color:#444;transform-origin:0 0;transform:matrix(0.6,-0.42,0,1,1814.2,254.5)">Left</span>
<span class="t" style="left:0;top:0;font-size:17px;color:#555;transform-origin:0 0;transform:matrix(-0.88,-0.26,0.5,-0.43,1796.8,214.6)">Top</span>
<!-- right tabs -->
<div class="abs" style="left:1872px;top:367px;width:40px;height:249px;border:1px solid #aaa;background:#fff"></div>
<div class="abs" style="left:1872px;top:417px;width:40px;height:1px;background:#aaa"></div>
<div class="abs" style="left:1872px;top:466px;width:40px;height:1px;background:#aaa"></div>
<div class="abs" style="left:1872px;top:516px;width:40px;height:1px;background:#aaa"></div>
<div class="abs" style="left:1872px;top:565px;width:40px;height:1px;background:#aaa"></div>
</div>
<!-- RIGHTICONS -->
<div id="rt">
<svg width="48" height="260" viewBox="1868 365 48 260" style="left:1868px;top:365px">
 <defs><g id="grid"><rect x="0" y="0" width="14.6" height="11.6"/><g fill="#fff"><rect x="1.3" y="4.6" width="3.3" height="1.4"/><rect x="5.7" y="4.6" width="3.3" height="1.4"/><rect x="10.1" y="4.6" width="3.3" height="1.4"/><rect x="1.3" y="8" width="3.3" height="1.4"/><rect x="5.7" y="8" width="3.3" height="1.4"/><rect x="10.1" y="8" width="3.3" height="1.4"/></g><g class="gt"><rect x="1.3" y="1.2" width="3.3" height="2.2"/><rect x="5.7" y="1.2" width="3.3" height="2.2"/><rect x="10.1" y="1.2" width="3.3" height="2.2"/></g></g></defs>
 <!-- swatches -->
 <path d="M1886.2,398 L1896.5,380 Q1897.3,379 1898.5,379.8 L1903.8,383 L1896,398 Z" fill="#666"/>
 <path d="M1896,398 L1903.8,385.5 L1908,388 V398 Z" fill="#999"/>
 <path d="M1890,398 L1896,388.5 L1901,398 Z" fill="#ddd"/>
 <rect x="1883.6" y="398.7" width="30" height="8.8" rx="1.5" fill="#fff" stroke="#333" stroke-width="1.1"/>
 <rect x="1903" y="399.3" width="8" height="7.6" fill="#ddd"/>
 <path d="M1893,398.7 V407.5 M1902.9,398.7 V407.5" stroke="#999" stroke-width="1"/>
 <circle cx="1887.7" cy="403.1" r="1.5" fill="none" stroke="#333" stroke-width="0.9"/>
 <!-- cube w/ blue grid -->
 <g fill="none" stroke="#333" stroke-width="1.3" stroke-linejoin="round"><path d="M1888.4,439.5 V452.3 L1899.3,457.4 L1910,452.5 V440"/><path d="M1888.4,439.5 L1899.3,444.3 L1910,439.5 M1899.3,444.3 V457.4 M1896,435.6 L1899.3,434.1 L1910,439.5"/></g>
 <use href="#grid" x="1882.1" y="429.2" fill="#2650b3"/><g fill="#6ea4ee"><rect x="1883.4" y="430.4" width="3.3" height="2.2"/><rect x="1887.8" y="430.4" width="3.3" height="2.2"/><rect x="1892.2" y="430.4" width="3.3" height="2.2"/></g>
 <!-- config cube -->
 <g fill="none" stroke="#333" stroke-width="1.1" stroke-linejoin="round"><path d="M1888.8,489 V497 L1896.6,500.5 L1905.2,497 V489.2 L1898,486.3"/><path d="M1888.8,490.5 L1896.6,493.5 L1905.2,489.2 M1896.6,493.5 V500.5"/><path d="M1887.2,490.5 Q1885.2,490.5 1885.2,493 V496 L1883.8,497.3 L1885.2,498.6 V502 Q1885.2,504.3 1887.2,504.3"/><path d="M1906,481.5 Q1908,481.5 1908,484 V488 L1909.5,489.5"/></g>
 <use href="#grid" x="1882.2" y="477.8" fill="#3a3a3a"/>
 <!-- hole w/ grid -->
 <g stroke="#333" stroke-width="1.1" stroke-linejoin="round"><path d="M1883.6,538 V550.7 L1888.8,555.4 H1910 V533 L1905.2,530 H1896" fill="#fff"/><path d="M1888.8,555.4 V541" fill="none" stroke="#888" stroke-width="0.8"/><circle cx="1899.4" cy="545.2" r="7.8" fill="#999"/><circle cx="1898.3" cy="544" r="5.2" fill="#888" stroke="#444" stroke-width="0.9"/><circle cx="1896.8" cy="542.5" r="2" fill="#ccc" stroke="none"/></g>
 <use href="#grid" x="1882.2" y="528" fill="#3a3a3a"/>
 <!-- variables -->
 <use href="#grid" x="1882.2" y="577.4" fill="#3a3a3a"/>
 <path d="M1885.2,589 Q1882.2,596.5 1886.2,603.5" fill="none" stroke="#333" stroke-width="1.5"/>
</svg>
<span class="t" style="left:1887px;top:574.7px;font-family:'Liberation Serif',serif;font-style:italic;font-weight:700;font-size:29px;color:#222;transform:scaleX(1.3);transform-origin:0 0">x</span>
<svg width="170" height="60" viewBox="1740 838 170 60" style="left:1740px;top:838px">
 <!-- tape -->
 <g stroke="#333" stroke-width="1.3" stroke-linejoin="round" fill="#fff">
  <path d="M1780.1,875 V879.5 H1773.6 V886.5 H1790 Q1796.8,886 1796.8,881 V875"/>
  <ellipse cx="1788.4" cy="874.9" rx="8.4" ry="5.3"/>
  <ellipse cx="1788.4" cy="874.9" rx="4.2" ry="2.1"/>
 </g>
 <path d="M1776,883.5 V886.5 M1778.3,884.5 V886.5 M1780.6,883.5 V886.5 M1782.9,884.5 V886.5 M1785.2,883.5 V886.5 M1787.5,884.5 V886.5 M1789.8,883.5 V886.5 M1792.1,884.3 V886" stroke="#333" stroke-width="0.7"/>
 <!-- protractor -->
 <g stroke="#333" fill="none" stroke-linejoin="round">
  <path d="M1823.9,887.5 V884.5 A14.1,14.4 0 0 1 1852.1,884.5 V887.5 Z" stroke-width="1.4" fill="#fff"/>
  <path d="M1829.2,884.3 A8.8,8.8 0 0 1 1846.8,884.3 H1841 A3,3 0 0 0 1835,884.3 Z" stroke-width="1.3"/>
  <path d="M1823.9,884.6 H1852.1" stroke-width="1"/>
  <circle cx="1838" cy="884.5" r="12" stroke-width="1.8" stroke-dasharray="0.7,1.4" clip-path="url(#pc)"/>
 </g>
 <clipPath id="pc"><rect x="1820" y="866" width="36" height="18"/></clipPath>
 <!-- scales -->
 <g fill="#333"><rect x="1882.5" y="867.5" width="15.1" height="2"/><rect x="1889.3" y="868" width="1.5" height="18.5"/><rect x="1879.6" y="885.9" width="20.8" height="2.4"/><rect x="1879.6" y="880" width="7.4" height="1.9"/><rect x="1893.1" y="880" width="7.4" height="1.9"/></g>
 <g fill="none" stroke="#333" stroke-width="1.1"><path d="M1880.3,880 L1884.2,869.5 L1886.4,880"/><path d="M1893.7,880 L1895.9,869.5 L1899.8,880"/></g>
</svg>
</div>
</body>
</html>
